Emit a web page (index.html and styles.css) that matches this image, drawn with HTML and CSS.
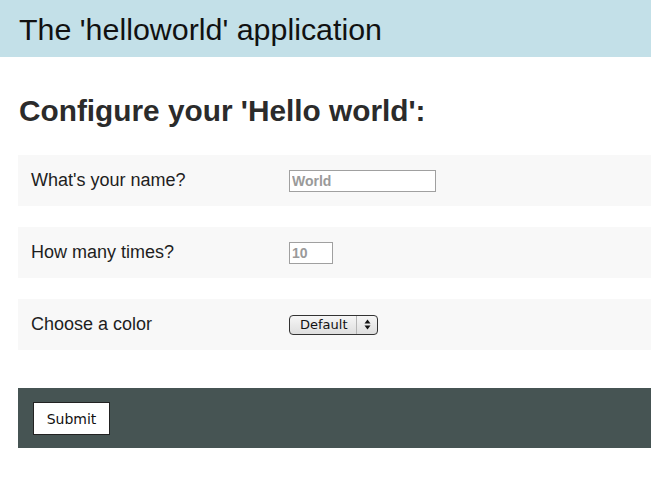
FILE: index.html
```html
<!DOCTYPE html>
<html>
<head>
<meta charset="utf-8">
<link rel="stylesheet" href="styles.css">
</head>
<body>
<header class="topbar"><h1 class="app-title">The 'helloworld' application</h1></header>
<main class="content">
  <h2 class="page-title">Configure your 'Hello world':</h2>
  <form class="config-form">
    <div class="field-row">
      <label class="field-label" for="name">What's your name?</label>
      <input class="text-input" id="name" type="text" placeholder="World">
    </div>
    <div class="field-row">
      <label class="field-label" for="times">How many times?</label>
      <input class="num-input" id="times" type="text" placeholder="10">
    </div>
    <div class="field-row">
      <label class="field-label" for="color">Choose a color</label>
      <span class="select-wrap">
        <select class="color-select" id="color"><option>Default</option></select>
        <span class="select-arrows"><svg width="7" height="11" viewBox="0 0 7 11"><path d="M3.5 0.5 L6.5 4.5 L0.5 4.5 Z M3.5 10.5 L6.5 6.5 L0.5 6.5 Z" fill="#111"/></svg></span>
      </span>
    </div>
    <div class="actions">
      <button class="submit-btn" type="button">Submit</button>
    </div>
  </form>
</main>
</body>
</html>
```
FILE: styles.css
```css
html, body {
  margin: 0;
  padding: 0;
  background: #fff;
  overflow: hidden;
}
body {
  font-family: "Liberation Sans", Arial, sans-serif;
  color: #222;
}
.topbar {
  background: #c3e0e8;
  height: 57px;
  display: flex;
  align-items: center;
  padding-left: 19px;
}
.app-title {
  margin: 0;
  font-weight: normal;
  font-size: 30.4px;
  color: #111;
  line-height: 1;
  padding-top: 1px;
}
.content {
  padding-left: 18px;
}
.page-title {
  margin: 0;
  padding: 38px 0 0 1px;
  font-size: 29.8px;
  line-height: 32px;
  font-weight: bold;
  color: #2b2b2b;
}
.config-form {
  margin-top: 28px;
  display: flex;
  flex-direction: column;
  gap: 21px;
}
.field-row {
  background: #f8f8f8;
  height: 51px;
  display: flex;
  align-items: center;
  padding-left: 13px;
}
.field-label {
  width: 258px;
  font-size: 18px;
  color: #1e1e1e;
}
.text-input, .num-input {
  box-sizing: border-box;
  height: 22px;
  border: 1px solid #a0a0a0;
  background: #fff;
  font-family: "Liberation Sans", sans-serif;
  font-size: 14px;
  font-weight: bold;
  padding: 1px 2px 0;
  margin: 0;
}
.text-input { width: 147px; }
.num-input { width: 44px; }
.text-input::placeholder, .num-input::placeholder {
  color: #9a9a9a;
  font-weight: bold;
}
.select-wrap {
  position: relative;
  display: inline-block;
}
.color-select {
  appearance: none;
  -webkit-appearance: none;
  box-sizing: border-box;
  width: 89px;
  height: 20px;
  border: 1px solid #333;
  border-radius: 4px;
  background: linear-gradient(#f6f6f6, #dedede);
  font-family: "DejaVu Sans", sans-serif;
  font-size: 13px;
  color: #111;
  padding: 0 0 0 10px;
  margin: 0;
  display: block;
}
.select-arrows {
  position: absolute;
  right: 1px;
  top: 1px;
  bottom: 1px;
  width: 20px;
  border-left: 1px solid #b5b5b5;
  display: flex;
  align-items: center;
  justify-content: center;
  pointer-events: none;
}
.actions {
  margin-top: 17px;
  background: #465453;
  height: 60px;
  display: flex;
  align-items: center;
  padding-left: 15px;
}
.submit-btn {
  box-sizing: border-box;
  width: 77px;
  height: 33px;
  background: #fff;
  border: 1px solid #222;
  border-radius: 0;
  font-family: "DejaVu Sans", sans-serif;
  font-size: 14px;
  color: #111;
  padding: 0;
  margin-top: 1px;
}
```
